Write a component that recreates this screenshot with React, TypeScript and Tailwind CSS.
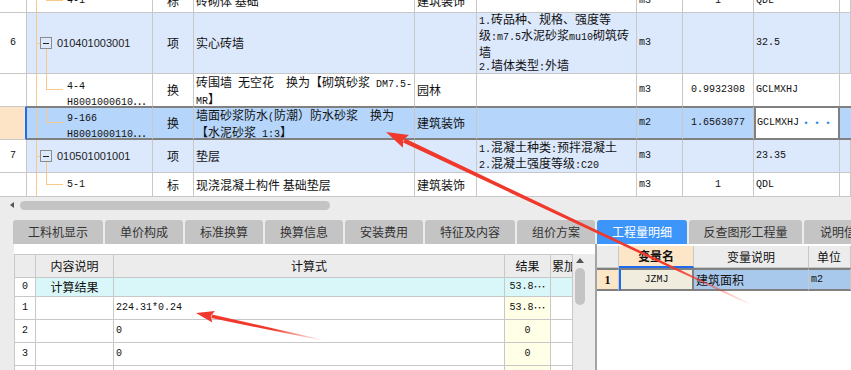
import type { ReactNode } from "react"

const COLS = "grid grid-cols-[27px_126px_41px_221px_62px_160px_46px_71px_86px_1fr]"
const L = "border-r border-b border-[#c8c8c8]"
const SEL = "border-y-2 border-y-[#808080] border-r border-r-[#c8c8c8]"
const ORANGE = "bg-[#f9c98a]"

function M({ children }: { children: ReactNode }) {
  return <span className="font-['Liberation_Mono',monospace] text-[10px] whitespace-pre">{children}</span>
}

function C({ className = "", children }: { className?: string; children?: ReactNode }) {
  return <div className={`relative overflow-hidden ${className}`}>{children}</div>
}

function ChildTree({ stem }: { stem: string }) {
  return (
    <>
      <div className={`absolute left-[9px] top-0 bottom-0 w-px ${ORANGE}`} />
      <div className={`absolute left-[19px] top-0 w-[17px] border-l border-b border-[#f9c98a] ${stem}`} />
    </>
  )
}

function ParentTree() {
  return (
    <>
      <div className={`absolute left-[9px] top-0 bottom-0 w-px ${ORANGE}`} />
      <div className={`absolute left-[9px] top-1/2 w-[4px] h-px ${ORANGE}`} />
      <div className={`absolute left-[19px] top-[calc(50%+6px)] bottom-0 w-px ${ORANGE}`} />
      <div className="absolute left-[13px] top-1/2 -translate-y-1/2 w-[12px] h-[12px] border border-[#8c8c8c] flex items-center justify-center">
        <div className="w-[6px] h-px bg-[#222]" />
      </div>
    </>
  )
}

function TopGrid() {
  const mid = "flex items-center"
  return (
    <div className="h-[197px] overflow-hidden bg-white">
      {/* partially scrolled row */}
      <div className={`${COLS} h-[24px] -mt-[11px] bg-white`}>
        <C className={L} />
        <C className={`${L} ${mid} pl-[40px]`}>
          <ChildTree stem="h-[12px]" />
          <M>4-1</M>
        </C>
        <C className={`${L} ${mid} justify-center`}>标</C>
        <C className={`${L} ${mid} pl-[2px] whitespace-pre`}>砖砌体 基础</C>
        <C className={`${L} ${mid} pl-[2px]`}>建筑装饰</C>
        <C className={L} />
        <C className={`${L} ${mid} pl-[2px]`}><M>m3</M></C>
        <C className={`${L} ${mid} justify-center`}><M>1</M></C>
        <C className={`${L} ${mid} pl-[2px]`}><M>QDL</M></C>
        <C className={L} />
      </div>

      {/* row 6 */}
      <div className={`${COLS} h-[61px] bg-[#dce8fc]`}>
        <C className={`${L} ${mid} justify-center bg-white`}><M>6</M></C>
        <C className={`${L} ${mid} pl-[30px]`}>
          <ParentTree />
          <span className="font-['Liberation_Sans',sans-serif] text-[11px] text-[#222]">010401003001</span>
        </C>
        <C className={`${L} ${mid} justify-center`}>项</C>
        <C className={`${L} ${mid} pl-[2px]`}>实心砖墙</C>
        <C className={L} />
        <C className={`${L} ${mid} pl-[2px] leading-[13.5px]`}>
          <div>
            <div><M>1.</M>砖品种、规格、强度等</div>
            <div>级<M>:m7.5</M>水泥砂浆<M>mu10</M>砌筑砖</div>
            <div>墙</div>
            <div><M>2.</M>墙体类型<M>:</M>外墙</div>
          </div>
        </C>
        <C className={`${L} ${mid} pl-[2px]`}><M>m3</M></C>
        <C className={L} />
        <C className={`${L} ${mid} pl-[2px]`}><M>32.5</M></C>
        <C className={L} />
      </div>

      {/* row 4-4 */}
      <div className={`${COLS} h-[32px] bg-white`}>
        <C className="border-r border-[#c8c8c8]" />
        <C className={`border-r border-[#c8c8c8] pl-[40px] pt-[3px] leading-[13px]`}>
          <ChildTree stem="h-[16px]" />
          <div><M>4-4</M></div>
          <div className="whitespace-nowrap"><M>H8001000610</M>…</div>
        </C>
        <C className={`border-r border-[#c8c8c8] ${mid} justify-center`}>换</C>
        <C className={`border-r border-[#c8c8c8] pl-[2px] pt-[1px] leading-[14px]`}>
          <div className="whitespace-nowrap">砖围墙<M> </M>无空花<M>  </M>换为【砌筑砂浆<M> DM7.5-</M></div>
          <div><M>MR</M>】</div>
        </C>
        <C className={`border-r border-[#c8c8c8] ${mid} pl-[2px]`}>园林</C>
        <C className="border-r border-[#c8c8c8]" />
        <C className={`border-r border-[#c8c8c8] ${mid} pl-[2px]`}><M>m3</M></C>
        <C className={`border-r border-[#c8c8c8] ${mid} justify-center`}><M>0.9932308</M></C>
        <C className={`border-r border-[#c8c8c8] ${mid} pl-[2px]`}><M>GCLMXHJ</M></C>
        <C />
      </div>

      {/* selected row 9-166 */}
      <div className={`${COLS} h-[34px] bg-[#b5d5fb]`}>
        <C className="bg-[#fde4c6] border-r-2 border-r-[#1d6cf0] border-y border-y-[#c8c8c8]" />
        <C className={`${SEL} pl-[40px] leading-[13px] pt-[1px]`}>
          <div className={`absolute left-[9px] top-0 bottom-0 w-px ${ORANGE}`} />
          <div className="absolute left-[19px] top-0 w-[17px] h-[15px] border-l border-b border-[#f9c98a]" />
          <div><M>9-166</M></div>
          <div className="whitespace-nowrap"><M>H8001000110</M>…</div>
        </C>
        <C className={`${SEL} ${mid} justify-center`}>换</C>
        <C className={`${SEL} pl-[2px] leading-[14px]`}>
          <div className="whitespace-nowrap">墙面砂浆防水<M>(</M>防潮）防水砂浆<M>  </M>换为</div>
          <div>【水泥砂浆<M> 1:3</M>】</div>
        </C>
        <C className={`${SEL} ${mid} pl-[2px]`}>建筑装饰</C>
        <C className={SEL} />
        <C className={`${SEL} ${mid} pl-[2px]`}><M>m2</M></C>
        <C className={`${SEL} ${mid} justify-center`}><M>1.6563077</M></C>
        <C className={`border-2 border-[#808080] bg-white ${mid} pl-[1px] pr-[4px] justify-between`}>
          <M>GCLMXHJ</M>
          <span className="text-[#3a8ee6] text-[10px] font-bold tracking-[1px]">···</span>
        </C>
        <C className="border-y-2 border-y-[#808080]" />
      </div>

      {/* row 7 */}
      <div className={`${COLS} h-[33px] bg-[#dce8fc]`}>
        <C className={`${L} ${mid} justify-center bg-white`}><M>7</M></C>
        <C className={`${L} ${mid} pl-[30px]`}>
          <ParentTree />
          <span className="font-['Liberation_Sans',sans-serif] text-[11px] text-[#222]">010501001001</span>
        </C>
        <C className={`${L} ${mid} justify-center`}>项</C>
        <C className={`${L} ${mid} pl-[2px]`}>垫层</C>
        <C className={L} />
        <C className={`${L} ${mid} pl-[2px] leading-[13.5px]`}>
          <div>
            <div><M>1.</M>混凝土种类<M>:</M>预拌混凝土</div>
            <div><M>2.</M>混凝土强度等级<M>:C20</M></div>
          </div>
        </C>
        <C className={`${L} ${mid} pl-[2px]`}><M>m3</M></C>
        <C className={L} />
        <C className={`${L} ${mid} pl-[2px]`}><M>23.35</M></C>
        <C className={L} />
      </div>

      {/* row 5-1 */}
      <div className={`${COLS} h-[24px] bg-white`}>
        <C className={L} />
        <C className={`${L} ${mid} pl-[40px]`}>
          <ChildTree stem="h-[12px]" />
          <M>5-1</M>
        </C>
        <C className={`${L} ${mid} justify-center`}>标</C>
        <C className={`${L} ${mid} pl-[2px] whitespace-pre`}>现浇混凝土构件 基础垫层</C>
        <C className={`${L} ${mid} pl-[2px]`}>建筑装饰</C>
        <C className={L} />
        <C className={`${L} ${mid} pl-[2px]`}><M>m3</M></C>
        <C className={`${L} ${mid} justify-center`}><M>1</M></C>
        <C className={`${L} ${mid} pl-[2px]`}><M>QDL</M></C>
        <C className={L} />
      </div>
    </div>
  )
}

function HScroll() {
  return (
    <div className="h-[16px] flex items-center bg-[#ececec]">
      <div className="w-[10px]" />
      <div className="w-0 h-0 border-y-[3px] border-y-transparent border-r-[4px] border-r-[#555]" />
      <div className="w-[6px]" />
      <div className="w-[310px] h-[9px] rounded-full bg-[#c4c4c4]" />
    </div>
  )
}

const TABS: { label: string; w: string }[] = [
  { label: "工料机显示", w: "w-[90px]" },
  { label: "单价构成", w: "w-[78px]" },
  { label: "标准换算", w: "w-[78px]" },
  { label: "换算信息", w: "w-[78px]" },
  { label: "安装费用", w: "w-[78px]" },
  { label: "特征及内容", w: "w-[90px]" },
  { label: "组价方案", w: "w-[78px]" },
  { label: "工程量明细", w: "w-[90px]" },
  { label: "反查图形工程量", w: "w-[113px]" },
  { label: "说明信息", w: "w-[80px]" },
]

function Tabs() {
  return (
    <div className="h-[24px] flex gap-[2px] pl-[13px] bg-[#ececec] overflow-hidden">
      {TABS.map((t) => {
        const active = t.label === "工程量明细"
        return (
          <div
            key={t.label}
            className={`${t.w} shrink-0 h-full rounded-t-[3px] flex items-center justify-center text-[12px] ${
              active ? "bg-[#3d95fa] text-white" : "bg-[#c4c4c4] text-[#333]"
            }`}
          >
            {t.label}
          </div>
        )
      })}
    </div>
  )
}

const BL = "grid grid-cols-[21px_78px_391px_46px_22px]"
const CY = "bg-[#d9f6f8]"
const YE = "bg-[#fffee6]"

function Bottom() {
  const mid = "flex items-center"
  return (
    <div className="flex h-[126px]">
      <div className="w-[14px] bg-[#ececec]" />
      <div className="w-[581px] bg-white pt-[10px] flex">
        <div className="w-[559px] border-l border-t border-[#c8c8c8]">
          <div className={`${BL} h-[23px] bg-[#ececec]`}>
            <C className={L} />
            <C className={`${L} ${mid} justify-center`}>内容说明</C>
            <C className={`${L} ${mid} justify-center`}>计算式</C>
            <C className={`${L} ${mid} justify-center`}>结果</C>
            <C className={`${L} ${mid} pl-[1px] whitespace-nowrap`}>累加</C>
          </div>
          <div className={`${BL} h-[19px]`}>
            <C className={`${L} ${mid} justify-center`}><M>0</M></C>
            <C className={`${L} ${mid} justify-center ${CY}`}>计算结果</C>
            <C className={`${L} ${CY}`} />
            <C className={`${L} ${mid} justify-center whitespace-nowrap ${CY}`}><M>53.8</M>…</C>
            <C className={`${L} ${CY}`} />
          </div>
          <div className={`${BL} h-[23px]`}>
            <C className={`${L} ${mid} justify-center`}><M>1</M></C>
            <C className={L} />
            <C className={`${L} ${mid} pl-[2px]`}><M>224.31*0.24</M></C>
            <C className={`${L} ${mid} justify-center whitespace-nowrap ${YE}`}><M>53.8</M>…</C>
            <C className={L} />
          </div>
          {["2", "3"].map((n) => (
            <div key={n} className={`${BL} h-[23px]`}>
              <C className={`${L} ${mid} justify-center`}><M>{n}</M></C>
              <C className={L} />
              <C className={`${L} ${mid} pl-[2px]`}><M>0</M></C>
              <C className={`${L} ${mid} justify-center ${YE}`}><M>0</M></C>
              <C className={L} />
            </div>
          ))}
          <div className={`${BL} h-[23px]`}>
            <C className={L} />
            <C className={L} />
            <C className={L} />
            <C className={`${L} ${YE}`} />
            <C className={L} />
          </div>
        </div>
        <div className="w-[14px] bg-[#ececec] flex flex-col items-center pt-[4px]">
          <div className="w-0 h-0 border-x-[4px] border-x-transparent border-b-[5px] border-b-[#555]" />
          <div className="mt-[5px] w-[10px] h-[37px] rounded-full bg-[#c4c4c4]" />
        </div>
        <div className="w-[8px] bg-[#ececec]" />
      </div>
      <div className="w-[2px] bg-[#a4a4a4]" />
      <RightPanel />
    </div>
  )
}

function RightPanel() {
  const mid = "flex items-center"
  const RC = "grid grid-cols-[22px_75px_115px_1fr]"
  const RS = "border-y-2 border-y-[#808080] border-r border-r-[#c8c8c8]"
  return (
    <div className="flex-1 bg-white pt-[2px]">
      <div className={`${RC} h-[22px]`}>
        <C className={`${L} bg-[#ececec]`} />
        <C className="border-r border-[#c8c8c8] border-b-2 border-b-[#1d6cf0] bg-[#fde6c8] flex items-center justify-center font-bold">
          变量名
        </C>
        <C className={`${L} ${mid} justify-center bg-[#ececec]`}>变量说明</C>
        <C className={`${L} ${mid} pl-[8px] bg-[#ececec]`}>单位</C>
      </div>
      <div className={`${RC} h-[23px]`}>
        <C className={`${RS} ${mid} justify-center bg-[#fde6c8] font-bold`}>
          <span className="font-['Liberation_Serif',serif] text-[12px]">1</span>
        </C>
        <C className="border-2 border-[#808080] border-l-2 border-l-[#1d6cf0] bg-[#f0eddf] flex items-center justify-center">
          <M>JZMJ</M>
        </C>
        <C className={`${RS} ${mid} pl-[2px] bg-[#a9c9ec]`}>建筑面积</C>
        <C className={`${RS} ${mid} pl-[2px] bg-[#a9c9ec]`}><M>m2</M></C>
      </div>
    </div>
  )
}

type Pt = [number, number]

function Arrow({ id, tip, tail, head, half, w0, w1, fade }: {
  id: string; tip: Pt; tail: Pt; head: number; half: number; w0: number; w1: number; fade: number
}) {
  const dx = tip[0] - tail[0]
  const dy = tip[1] - tail[1]
  const len = Math.hypot(dx, dy)
  const ux = dx / len
  const uy = dy / len
  const nx = -uy
  const ny = ux
  const bx = tip[0] - ux * head
  const by = tip[1] - uy * head
  const p = (pts: number[][]) => pts.map((q) => `${q[0].toFixed(1)},${q[1].toFixed(1)}`).join(" ")
  const shaft = p([
    [tail[0] + (nx * w0) / 2, tail[1] + (ny * w0) / 2],
    [bx + ux * 2 + (nx * w1) / 2, by + uy * 2 + (ny * w1) / 2],
    [bx + ux * 2 - (nx * w1) / 2, by + uy * 2 - (ny * w1) / 2],
    [tail[0] - (nx * w0) / 2, tail[1] - (ny * w0) / 2],
  ])
  const tri = p([
    tip,
    [bx + nx * half, by + ny * half],
    [bx + ux * 3, by + uy * 3],
    [bx - nx * half, by - ny * half],
  ])
  return (
    <g>
      <defs>
        <linearGradient id={id} gradientUnits="userSpaceOnUse" x1={tail[0]} y1={tail[1]} x2={tip[0]} y2={tip[1]}>
          <stop offset="0" stopColor="#f0392c" stopOpacity="0" />
          <stop offset={fade} stopColor="#f0392c" stopOpacity="1" />
          <stop offset="1" stopColor="#f0392c" stopOpacity="1" />
        </linearGradient>
      </defs>
      <polygon points={shaft} fill={`url(#${id})`} />
      <polygon points={tri} fill="#f0392c" />
    </g>
  )
}

function Arrows() {
  return (
    <svg className="absolute inset-0 pointer-events-none" width="851" height="370">
      <Arrow id="a1" tip={[386, 132]} tail={[752, 305]} head={22} half={7} w0={1.5} w1={4.5} fade={0.22} />
      <Arrow id="a2" tip={[196, 313]} tail={[322, 340]} head={18} half={6} w0={1} w1={3.5} fade={0.4} />
    </svg>
  )
}

export default function App() {
  return (
    <div className="relative w-[851px] h-[370px] overflow-hidden bg-[#ececec] text-[#111] font-['Noto_Sans_CJK_SC',sans-serif] text-[12px] leading-[14px]">
      <TopGrid />
      <HScroll />
      <div className="h-[7px]" />
      <Tabs />
      <Bottom />
      <Arrows />
    </div>
  )
}
